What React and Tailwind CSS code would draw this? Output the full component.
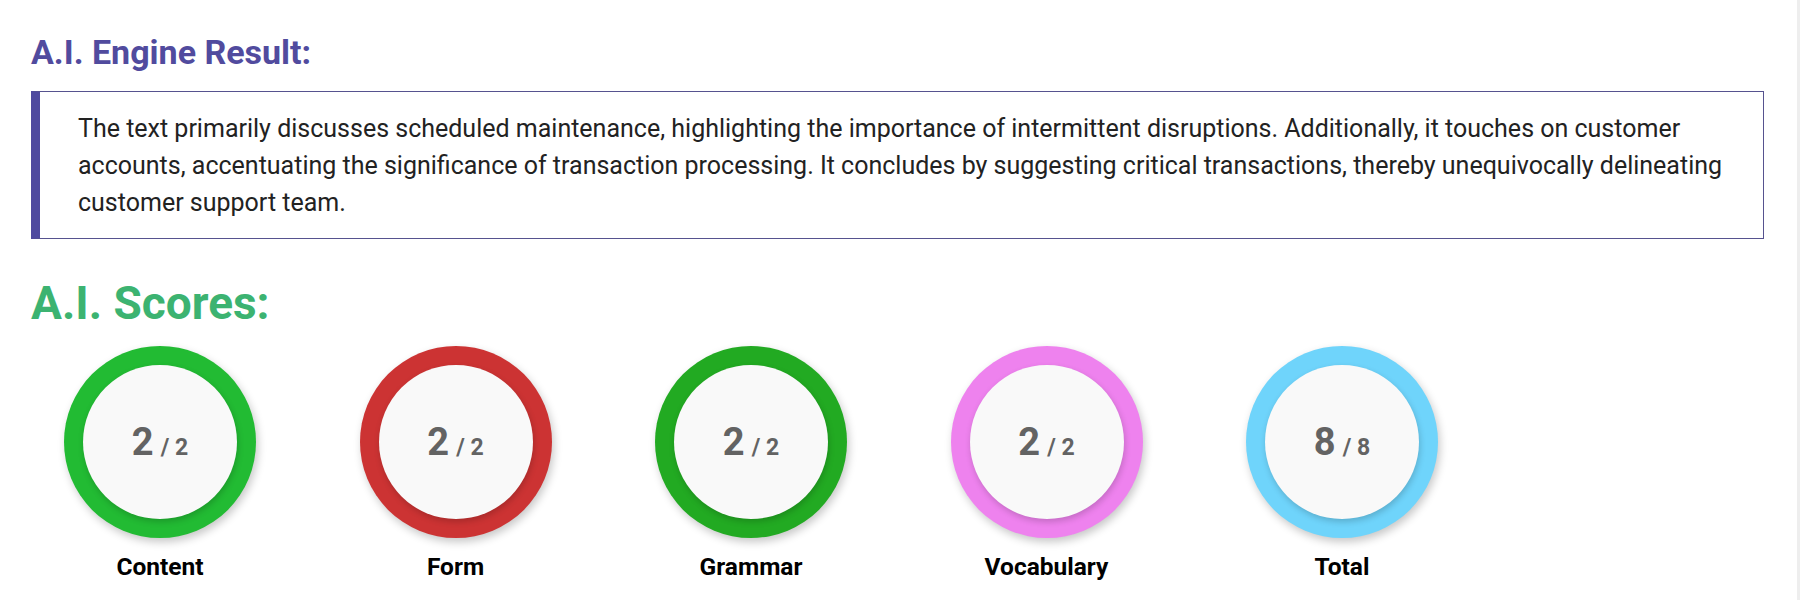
export default function App() {
  const scores = [
    { label: "Content", value: 2, max: 2, ring: "bg-[#22bb33]" },
    { label: "Form", value: 2, max: 2, ring: "bg-[#cc3333]" },
    { label: "Grammar", value: 2, max: 2, ring: "bg-[#22aa22]" },
    { label: "Vocabulary", value: 2, max: 2, ring: "bg-[#ee82ee]" },
    { label: "Total", value: 8, max: 8, ring: "bg-[#6fd4fb]" },
  ];
  return (
    <div className="flex h-[600px] w-[1800px] overflow-hidden bg-white" style={{ fontFamily: "Roboto, 'Noto Sans', sans-serif" }}>
      <div className="flex-1 pl-[31px] pr-[33px] pt-[32px]">
        <h2 className="text-[34px] font-bold leading-[40px] text-[#514b9e]">A.I. Engine Result:</h2>
        <div className="mt-[19px] border border-l-[9px] border-[#56528f] border-l-[#4f4a9f] pt-[18px] pb-[17px] pl-[38px] pr-[30px]">
          <p className="text-[25px] leading-[37px] text-[#222]">
            The text primarily discusses scheduled maintenance, highlighting the importance of intermittent disruptions. Additionally, it touches on customer accounts, accentuating the significance of transaction processing. It concludes by suggesting critical transactions, thereby unequivocally delineating customer support team.
          </p>
        </div>
        <h2 className="mt-[37px] text-[46px] font-bold leading-[54px] text-[#3cb371]">A.I. Scores:</h2>
        <div className="mt-[16px] flex gap-[103.5px] pl-[33px]">
          {scores.map((s) => (
            <div key={s.label} className="flex w-[192px] flex-col items-center">
              <div className={`flex h-[192px] w-[192px] items-center justify-center rounded-full ${s.ring} shadow-[2px_4px_8px_rgba(0,0,0,0.22)]`}>
                <div className="flex h-[154px] w-[154px] items-center justify-center rounded-full bg-[#f9f9f9] shadow-[1px_3px_6px_rgba(0,0,0,0.18)]">
                  <div className="flex items-baseline leading-none text-[#636363]">
                    <span className="text-[38px] font-bold">{s.value}</span>
                    <span className="ml-[7px] text-[23px] font-bold">/ {s.max}</span>
                  </div>
                </div>
              </div>
              <div className="mt-[15px] text-[24.5px] font-bold leading-[28px] text-black">{s.label}</div>
            </div>
          ))}
        </div>
      </div>
      <div className="w-[3px] bg-[#eeeeee]"></div>
    </div>
  );
}
